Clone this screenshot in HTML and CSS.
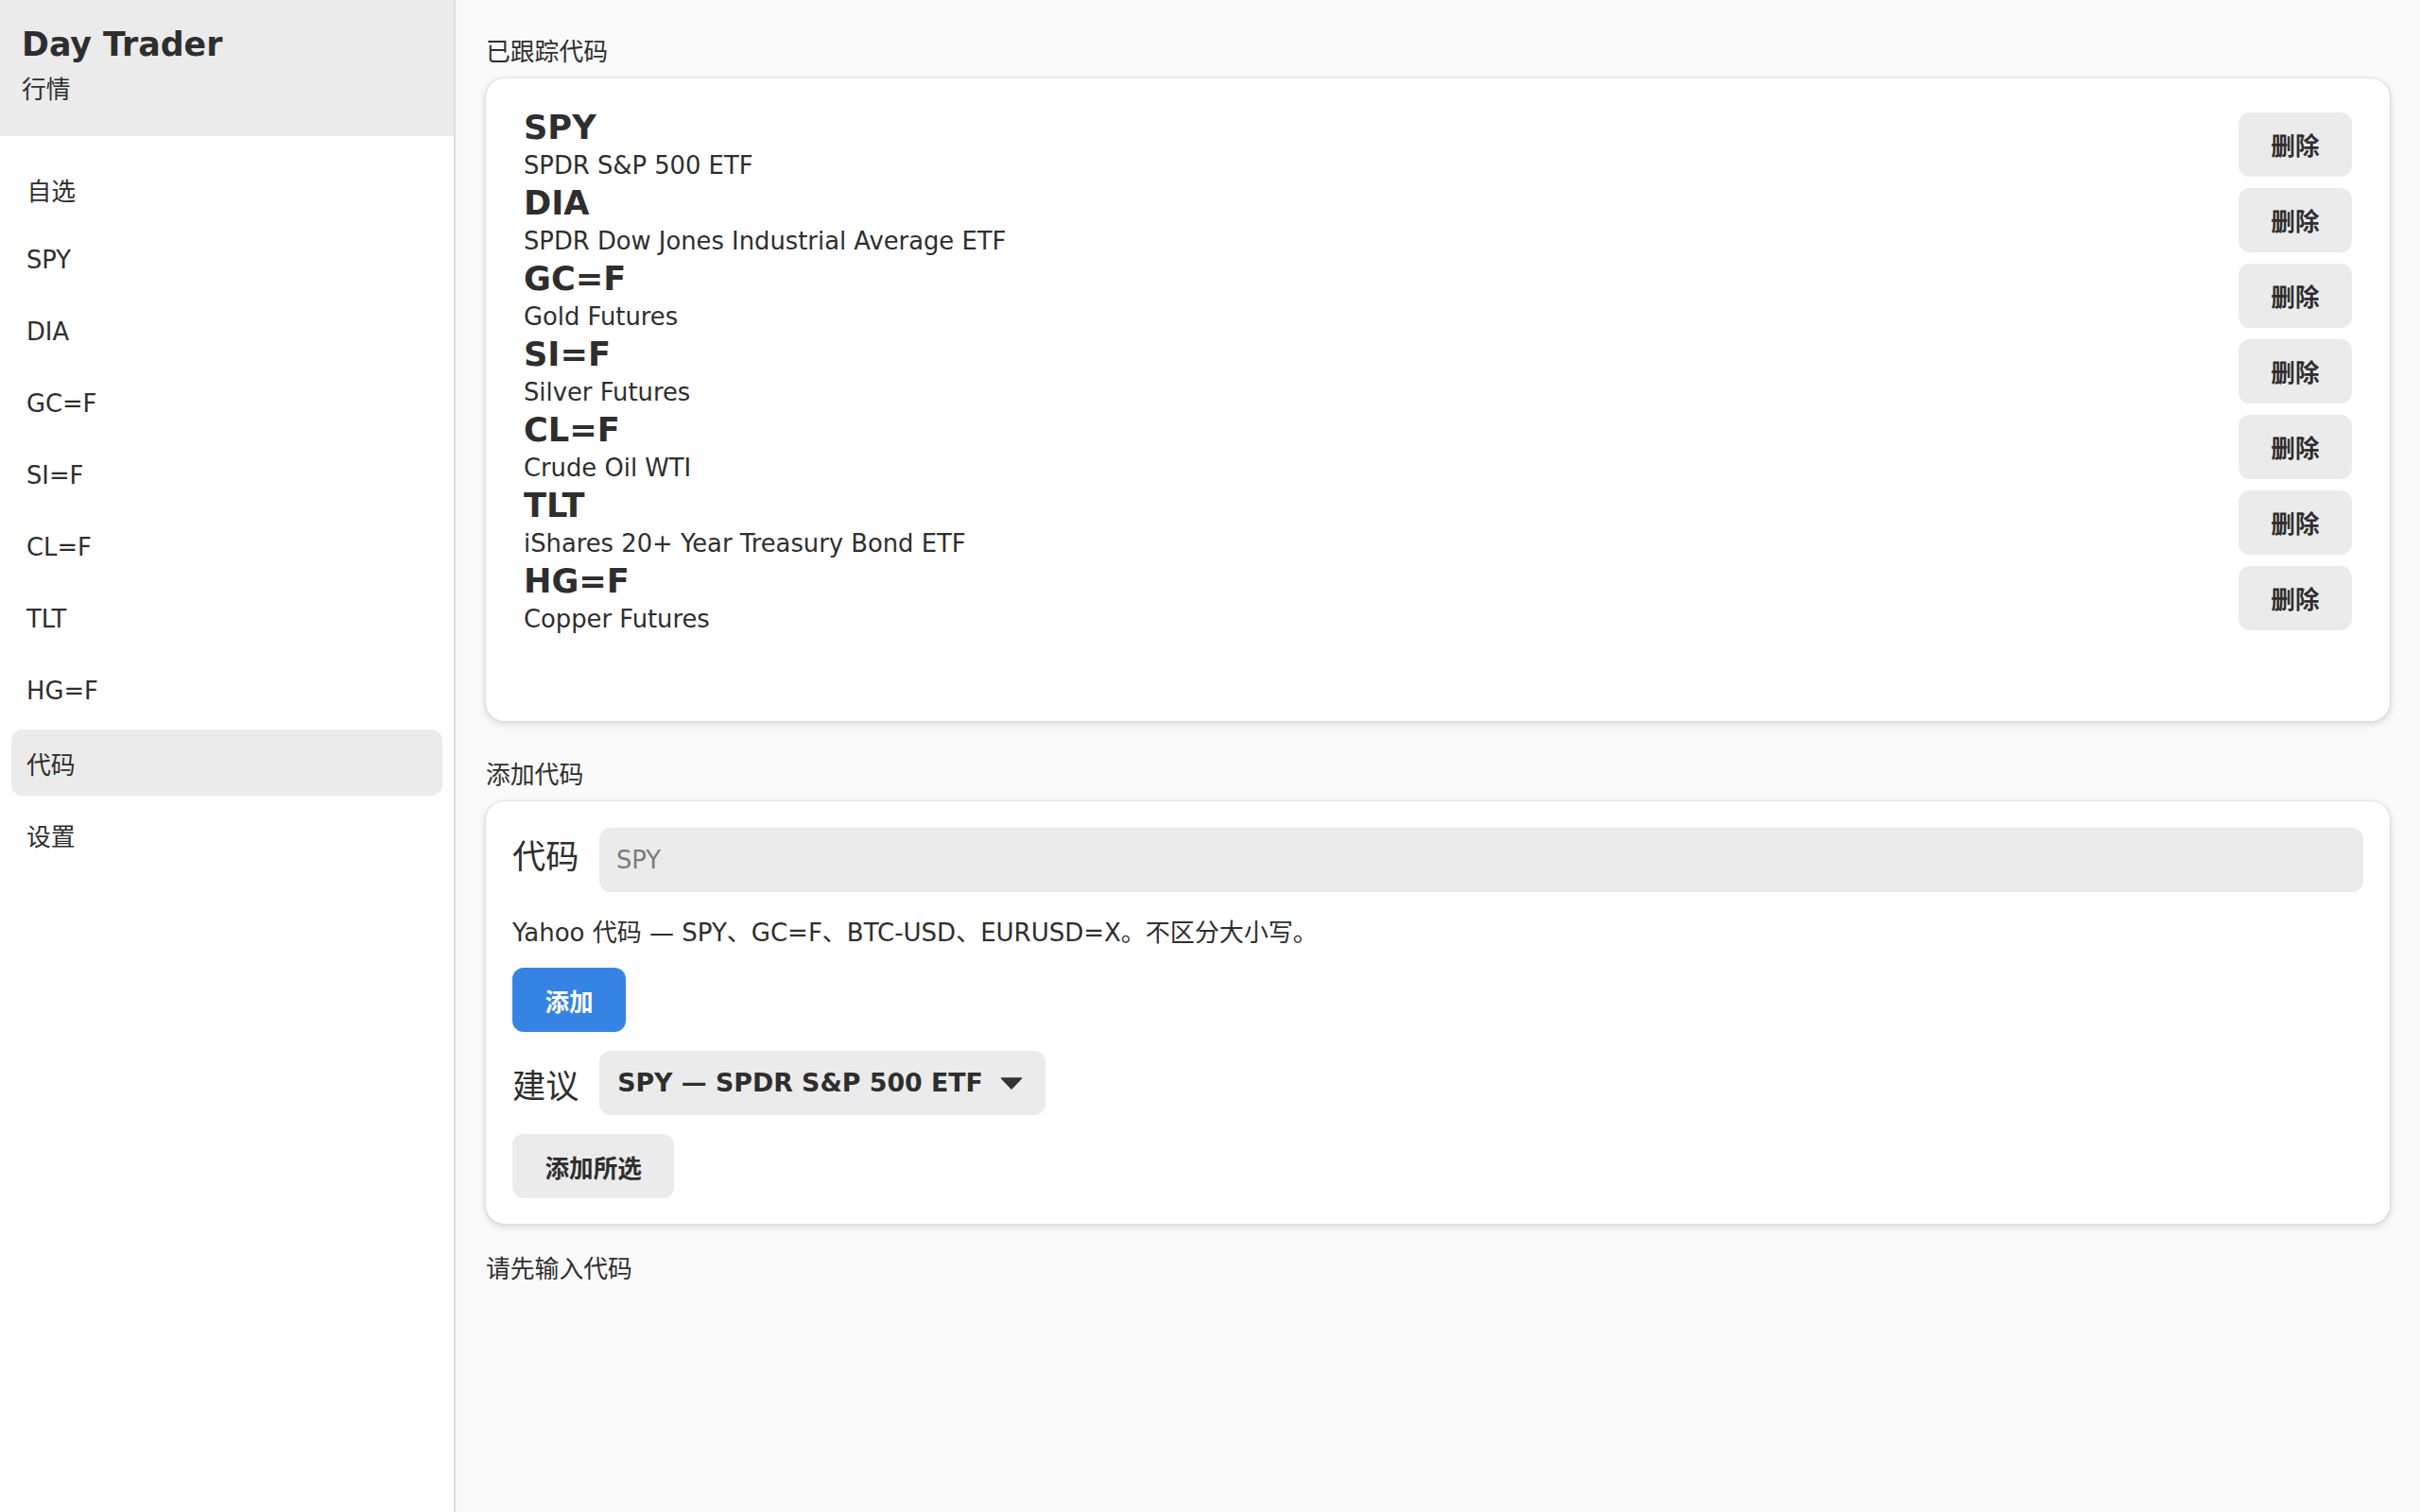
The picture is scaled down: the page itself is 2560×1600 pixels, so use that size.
FILE: index.html
```html
<!DOCTYPE html>
<html lang="zh-CN">
<head>
<meta charset="utf-8">
<title>Day Trader — 代码</title>
<link rel="stylesheet" href="styles.css">
</head>
<body>
<aside class="sidebar">
  <header class="brand">
    <div class="brand-title">Day Trader</div>
    <div class="brand-sub">行情</div>
  </header>
  <nav class="nav">
    <div class="nav-heading">自选</div>
    <button class="nav-item">SPY</button>
    <button class="nav-item">DIA</button>
    <button class="nav-item">GC=F</button>
    <button class="nav-item">SI=F</button>
    <button class="nav-item">CL=F</button>
    <button class="nav-item">TLT</button>
    <button class="nav-item">HG=F</button>
    <button class="nav-item active">代码</button>
    <button class="nav-item">设置</button>
  </nav>
</aside>
<main class="main">
  <section class="section">
    <h2 class="section-title">已跟踪代码</h2>
    <div class="card tracked">
      <div class="row">
        <div class="info"><div class="sym">SPY</div><div class="name">SPDR S&amp;P 500 ETF</div></div>
        <button class="btn">删除</button>
      </div>
      <div class="row">
        <div class="info"><div class="sym">DIA</div><div class="name">SPDR Dow Jones Industrial Average ETF</div></div>
        <button class="btn">删除</button>
      </div>
      <div class="row">
        <div class="info"><div class="sym">GC=F</div><div class="name">Gold Futures</div></div>
        <button class="btn">删除</button>
      </div>
      <div class="row">
        <div class="info"><div class="sym">SI=F</div><div class="name">Silver Futures</div></div>
        <button class="btn">删除</button>
      </div>
      <div class="row">
        <div class="info"><div class="sym">CL=F</div><div class="name">Crude Oil WTI</div></div>
        <button class="btn">删除</button>
      </div>
      <div class="row">
        <div class="info"><div class="sym">TLT</div><div class="name">iShares 20+ Year Treasury Bond ETF</div></div>
        <button class="btn">删除</button>
      </div>
      <div class="row">
        <div class="info"><div class="sym">HG=F</div><div class="name">Copper Futures</div></div>
        <button class="btn">删除</button>
      </div>
    </div>
  </section>
  <section class="section add-section">
    <h2 class="section-title">添加代码</h2>
    <div class="card add">
      <div class="field-row">
        <label class="field-label" for="sym">代码</label>
        <input class="input" id="sym" type="text" placeholder="SPY">
      </div>
      <p class="hint">Yahoo 代码 — SPY、GC=F、BTC-USD、EURUSD=X。不区分大小写。</p>
      <div class="actions"><button class="btn btn-primary">添加</button></div>
      <div class="select-row">
        <span class="field-label select-label">建议</span>
        <div class="dropdown">
          <span class="dropdown-text">SPY — SPDR S&amp;P 500 ETF</span>
          <svg class="caret" width="24" height="13" viewBox="0 0 24 13"><path d="M1.5 1 H22.5 L12 12 Z" fill="#333" stroke="#333" stroke-width="1.5" stroke-linejoin="round"/></svg>
        </div>
      </div>
      <div class="actions add-selected"><button class="btn">添加所选</button></div>
    </div>
  </section>
  <p class="status">请先输入代码</p>
</main>
</body>
</html>
```

FILE: styles.css
```css
* { box-sizing: border-box; }

html, body {
  margin: 0;
  padding: 0;
}

body {
  display: flex;
  min-height: 100vh;
  background: #fafafa;
  color: #2e2e2e;
  font-family: "DejaVu Sans", "Noto Sans CJK SC", sans-serif;
  font-size: 25.8px;
  line-height: 38.4px;
}

.sidebar {
  width: 482px;
  flex: 0 0 482px;
  background: #ffffff;
  border-right: 2px solid #dedede;
  min-height: 100vh;
}

.brand {
  background: #ebebeb;
  padding: 26.7px 23px 30px;
}

.brand-title {
  font-size: 34.8px;
  font-weight: bold;
  line-height: 41px;
}

.brand-sub {
  margin-top: 8px;
  line-height: 38.4px;
}

.nav {
  display: flex;
  flex-direction: column;
  align-items: stretch;
  padding: 38px 12px 0;
}

.nav-heading {
  height: 37.4px;
  padding: 0 16.5px;
  line-height: normal;
  margin-bottom: 20.5px;
}

.nav-item {
  display: flex;
  align-items: center;
  height: 70.4px;
  padding: 0 16px;
  margin-bottom: 5.6px;
  border: none;
  border-radius: 12px;
  background: transparent;
  color: #2e2e2e;
  font-family: inherit;
  font-size: 25.8px;
  line-height: normal;
  text-align: left;
}

.nav-item.active {
  background: #ebebeb;
}

.main {
  flex: 1;
  min-width: 0;
  padding: 36px 32px 0;
}

.section-title {
  margin: 0 0 8.6px;
  font-size: 25.8px;
  font-weight: normal;
  line-height: 38.4px;
}

.add-section {
  margin-top: 37.5px;
}

.add-section .section-title {
  margin-bottom: 9px;
}

.card {
  background: #ffffff;
  border-radius: 20px;
  box-shadow: 0 0 0 1.6px rgba(0, 0, 6, 0.03),
              0 1.6px 4.8px 1.6px rgba(0, 0, 6, 0.07),
              0 3.2px 9.6px 3.2px rgba(0, 0, 6, 0.03);
}

.tracked {
  padding: 31px 40px 89px;
}

.row {
  display: flex;
  justify-content: space-between;
  align-items: center;
}

.row .btn {
  margin-bottom: 3px;
}

.sym {
  font-size: 35.2px;
  font-weight: bold;
  line-height: 41.6px;
}

.name {
  line-height: 38.4px;
}

.btn {
  height: 68px;
  padding: 0 34.5px;
  border: none;
  border-radius: 12px;
  background: #ebebeb;
  color: #2e2e2e;
  font-family: "DejaVu Sans", "Noto Sans CJK SC", sans-serif;
  font-size: 25.6px;
  font-weight: bold;
  line-height: normal;
}

.btn-primary {
  background: #3584e4;
  color: #ffffff;
}

.add {
  padding: 28px 28px 27px;
}

.field-row {
  display: flex;
  align-items: baseline;
  gap: 21.6px;
}

.field-label {
  font-size: 35.2px;
  line-height: 52.8px;
  flex: 0 0 auto;
}

.input {
  flex: 1;
  min-width: 0;
  height: 68px;
  padding: 0 18px;
  border: none;
  border-radius: 12px;
  background: #ebebeb;
  color: #2e2e2e;
  font-family: "DejaVu Sans", "Noto Sans CJK SC", sans-serif;
  font-size: 25.8px;
  outline: none;
}

.input::placeholder {
  color: #7c7c7c;
}

.hint {
  margin: 24px 0 0;
  font-size: 26px;
  line-height: 38.4px;
}

.actions {
  display: flex;
  margin-top: 17.7px;
}

.add-selected {
  margin-top: 20px;
}

.select-row {
  display: flex;
  align-items: center;
  gap: 21.6px;
  margin-top: 20px;
}

.select-label {
  line-height: 35.2px;
  padding-top: 7.4px;
}

.dropdown {
  display: flex;
  align-items: center;
  gap: 18px;
  height: 68px;
  padding: 0 24px 0 19.2px;
  border-radius: 12px;
  background: #ebebeb;
}

.dropdown-text {
  font-size: 26.8px;
  font-weight: bold;
  line-height: 1;
  white-space: nowrap;
}

.caret {
  display: block;
  flex: 0 0 auto;
}

.status {
  margin: 29px 0 0;
  line-height: 38.4px;
}
```
